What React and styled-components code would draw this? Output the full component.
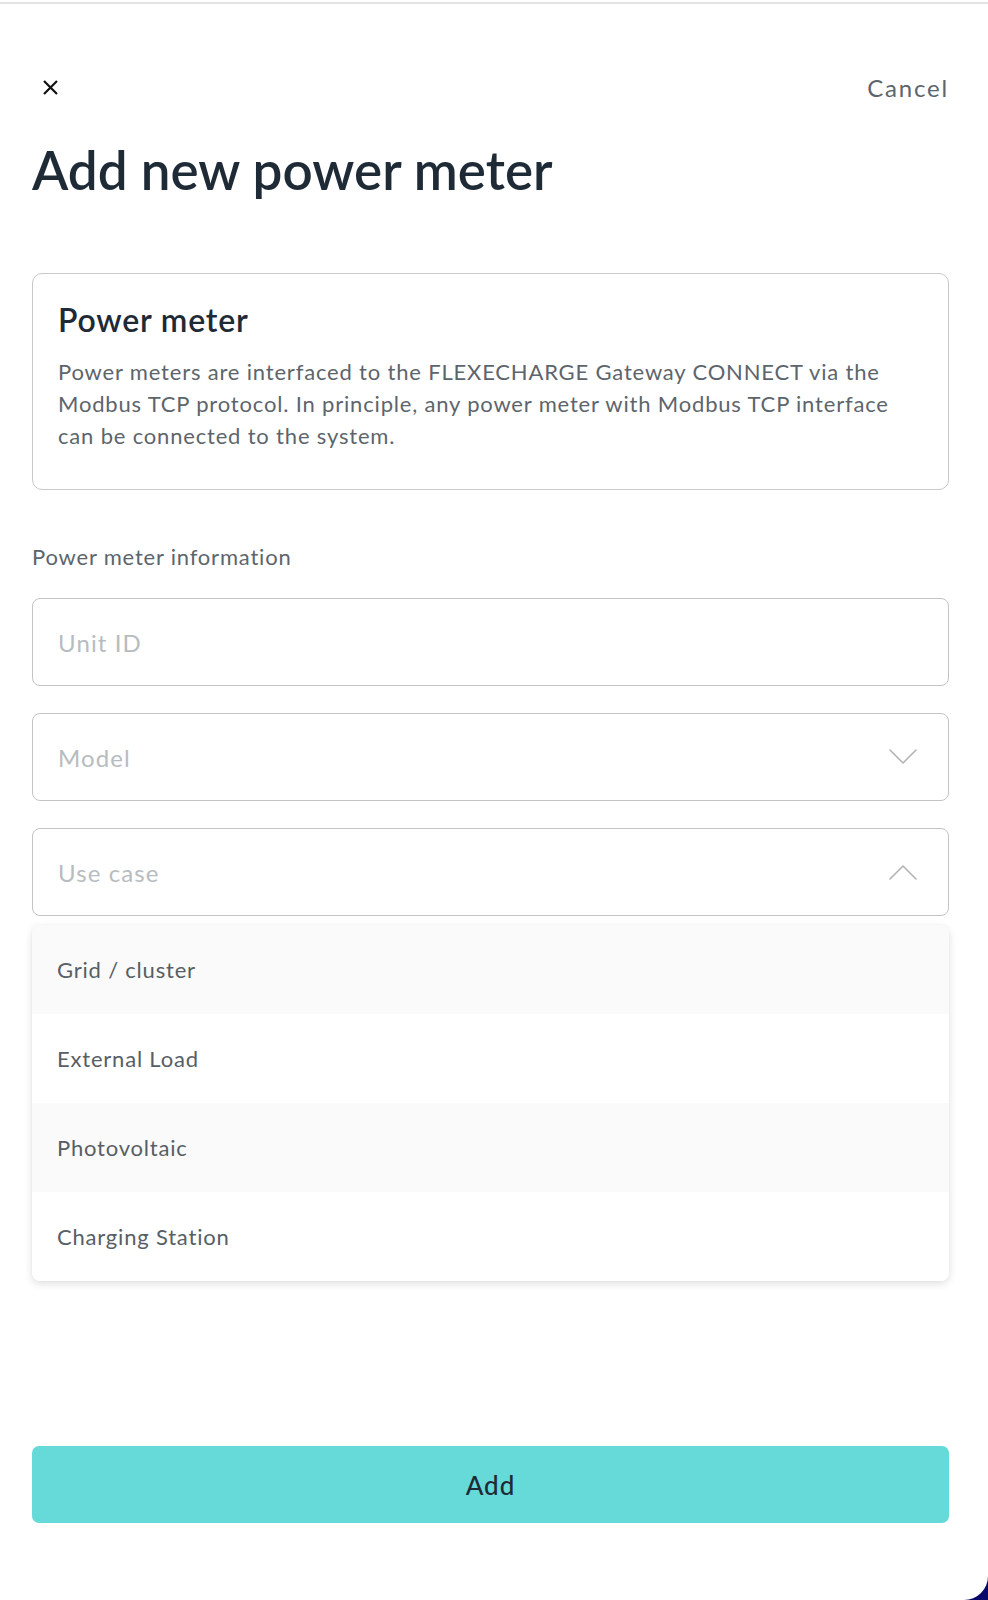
import React from "react";
import styled, { createGlobalStyle } from "styled-components";

const Global = createGlobalStyle`
  html, body { margin: 0; padding: 0; background: #08086b; }
  * { box-sizing: border-box; }
  body { font-family: Lato, "Noto Sans", sans-serif; }
`;

const Page = styled.div`
  width: 988px;
  height: 1600px;
  background: #ffffff;
  border-bottom-right-radius: 24px;
  display: flex;
  flex-direction: column;
  padding: 0 39px 77px 32px;
  overflow: hidden;
`;

const TopLine = styled.div`
  height: 2px;
  margin: 2px -39px 0 -32px;
  background: #e3e3e3;
`;

const Header = styled.div`
  margin-top: 63px;
  height: 40px;
  display: flex;
  align-items: center;
  justify-content: space-between;
`;

const CloseButton = styled.button`
  border: none;
  background: none;
  padding: 0;
  margin-left: 11px;
  width: 15px;
  height: 15px;
  display: flex;
  cursor: pointer;
`;

const CancelLink = styled.button`
  border: none;
  background: none;
  padding: 0;
  font-family: Lato, sans-serif;
  font-size: 24px;
  letter-spacing: 1.8px;
  color: #5d656c;
  cursor: pointer;
`;

const Title = styled.h1`
  margin: 33px 0 0;
  font-size: 53px;
  line-height: 60px;
  font-weight: 600;
  color: #1e2a35;
  letter-spacing: 0;
`;

const InfoCard = styled.section`
  margin-top: 73px;
  border: 1px solid #c9c9c9;
  border-radius: 10px;
  padding: 27px 25px 37px;
`;

const CardTitle = styled.h2`
  margin: 0;
  font-size: 32px;
  line-height: 38px;
  font-weight: 600;
  letter-spacing: 0.8px;
  color: #1e2a35;
`;

const CardText = styled.p`
  margin: 17px 0 0;
  font-size: 22px;
  line-height: 32px;
  letter-spacing: 0.82px;
  color: #5d656c;
`;

const SectionLabel = styled.div`
  margin-top: 53px;
  font-size: 22px;
  line-height: 28px;
  letter-spacing: 0.8px;
  color: #5d656c;
`;

const Fields = styled.div`
  margin-top: 27px;
  display: flex;
  flex-direction: column;
  gap: 27px;
`;

const FieldWrap = styled.div`
  position: relative;
`;

const FieldBox = styled.div`
  height: 88px;
  border: 1px solid #c4c4c4;
  border-radius: 8px;
  padding: 0 31px 0 25px;
  display: flex;
  align-items: center;
  justify-content: space-between;
`;

const Placeholder = styled.span`
  font-size: 24px;
  letter-spacing: 1.1px;
  color: #b8bcc0;
`;

const Menu = styled.ul`
  position: absolute;
  left: 0;
  right: 0;
  top: calc(100% + 9px);
  margin: 0;
  padding: 0;
  list-style: none;
  background: #ffffff;
  border-radius: 8px;
  overflow: hidden;
  box-shadow: 0 3px 8px rgba(0, 0, 0, 0.12), 0 0 2px rgba(0, 0, 0, 0.05);
  z-index: 2;
`;

const MenuItem = styled.li`
  height: 89px;
  display: flex;
  align-items: center;
  padding: 0 25px;
  font-size: 22px;
  letter-spacing: 0.8px;
  color: #575e65;
  background: ${(p) => (p.$shade ? "#fafafa" : "#ffffff")};
`;

const AddButton = styled.button`
  margin-top: auto;
  height: 77px;
  width: 100%;
  border: none;
  border-radius: 7px;
  background: #66d9d9;
  font-family: Lato, sans-serif;
  font-size: 26px;
  font-weight: 500;
  letter-spacing: 1px;
  color: #1e2a35;
  cursor: pointer;
`;

const Chevron = ({ up }) => (
  <svg width="28" height="16" viewBox="0 0 28 16" fill="none">
    <path
      d={up ? "M1 15 L14 2 L27 15" : "M1 1 L14 14 L27 1"}
      stroke="#b3b3b3"
      strokeWidth="1.6"
      strokeLinecap="round"
      strokeLinejoin="round"
    />
  </svg>
);

const CloseIcon = () => (
  <svg width="15" height="15" viewBox="0 0 15 15" fill="none">
    <path d="M1 1 L14 14 M14 1 L1 14" stroke="#111" strokeWidth="2.2" />
  </svg>
);

const options = ["Grid / cluster", "External Load", "Photovoltaic", "Charging Station"];

export default function App() {
  return (
    <>
      <Global />
      <Page>
        <TopLine />
        <Header>
          <CloseButton aria-label="Close">
            <CloseIcon />
          </CloseButton>
          <CancelLink>Cancel</CancelLink>
        </Header>
        <Title>Add new power meter</Title>
        <InfoCard>
          <CardTitle>Power meter</CardTitle>
          <CardText>
            Power meters are interfaced to the FLEXECHARGE Gateway CONNECT via the
            Modbus TCP protocol. In principle, any power meter with Modbus TCP interface
            can be connected to the system.
          </CardText>
        </InfoCard>
        <SectionLabel>Power meter information</SectionLabel>
        <Fields>
          <FieldBox>
            <Placeholder>Unit ID</Placeholder>
          </FieldBox>
          <FieldBox>
            <Placeholder>Model</Placeholder>
            <Chevron />
          </FieldBox>
          <FieldWrap>
            <FieldBox>
              <Placeholder>Use case</Placeholder>
              <Chevron up />
            </FieldBox>
            <Menu>
              {options.map((o, i) => (
                <MenuItem key={o} $shade={i % 2 === 0}>
                  {o}
                </MenuItem>
              ))}
            </Menu>
          </FieldWrap>
        </Fields>
        <AddButton>Add</AddButton>
      </Page>
    </>
  );
}
